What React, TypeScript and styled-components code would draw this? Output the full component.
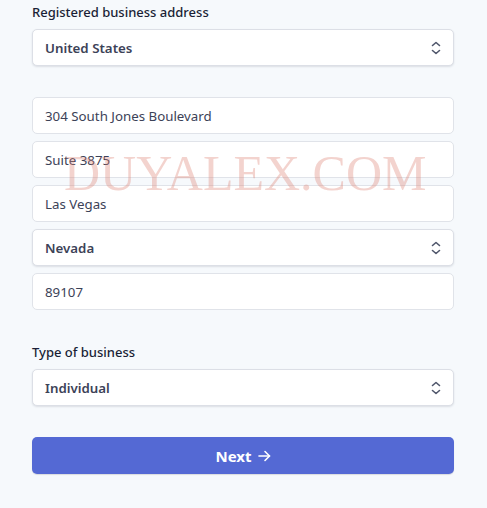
import styled, { createGlobalStyle } from "styled-components";

const GlobalStyle = createGlobalStyle`
  html, body {
    margin: 0;
    padding: 0;
    background: #f6f9fc;
  }
  body {
    font-family: "Noto Sans", "Open Sans", sans-serif;
    -webkit-font-smoothing: antialiased;
  }
`;

const Page = styled.div`
  position: relative;
  min-height: 508px;
  padding: 4px 33px 0 32px;
  box-sizing: border-box;
`;

const Form = styled.form`
  display: flex;
  flex-direction: column;
`;

const Label = styled.label`
  font-size: 13px;
  line-height: 17px;
  font-weight: 500;
  color: #1a1f36;
  margin-bottom: 8px;
`;

const FieldStack = styled.div<{ $top?: number }>`
  display: flex;
  flex-direction: column;
  gap: 7px;
  margin-top: ${(p) => p.$top ?? 0}px;
`;

const Box = styled.div`
  height: 37px;
  box-sizing: border-box;
  background: #fff;
  border-radius: 5px;
  display: flex;
  align-items: center;
  padding: 0 12px;
  font-size: 13.3px;
  color: #3c4257;
`;

const Input = styled(Box)`
  border: 1px solid #e0e3e9;
`;

const Select = styled(Box)`
  justify-content: space-between;
  font-weight: 600;
  border: 1px solid #dcdfe6;
  box-shadow: 0 1px 2px rgba(60, 66, 87, 0.14);
`;

const Section = styled.div<{ $top: number }>`
  display: flex;
  flex-direction: column;
  margin-top: ${(p) => p.$top}px;
`;

const NextButton = styled.button`
  margin-top: 31px;
  height: 37px;
  border: none;
  border-radius: 5px;
  background: #5469d4;
  color: #fff;
  font-family: inherit;
  font-size: 15px;
  font-weight: 700;
  display: flex;
  align-items: center;
  justify-content: center;
  gap: 6px;
  box-shadow: 0 1px 1px rgba(0, 0, 0, 0.12);
`;

const Watermark = styled.div`
  position: absolute;
  left: 64px;
  top: 144px;
  font-family: "Liberation Serif", serif;
  font-size: 50px;
  color: rgba(222, 130, 115, 0.35);
  pointer-events: none;
  white-space: nowrap;
`;

const Chevrons = () => (
  <svg width="10" height="14" viewBox="0 0 10 14" fill="none" stroke="#4f566b" strokeWidth="1.6" strokeLinecap="round" strokeLinejoin="round">
    <path d="M1.5 4.5L5 1.5l3.5 3" />
    <path d="M1.5 9.5L5 12.5l3.5-3" />
  </svg>
);

const Arrow = () => (
  <svg width="13" height="12" viewBox="0 0 13 12" fill="none" stroke="#fff" strokeWidth="1.6" strokeLinecap="round" strokeLinejoin="round">
    <path d="M1 6h10.5" />
    <path d="M7 1.5L11.5 6 7 10.5" />
  </svg>
);

const App = () => {
  return (
    <Page>
      <GlobalStyle />
      <Form>
        <Label>Registered business address</Label>
        <FieldStack>
          <Select>
            United States
            <Chevrons />
          </Select>
        </FieldStack>
        <FieldStack $top={31}>
          <Input>304 South Jones Boulevard</Input>
          <Input>Suite 3875</Input>
          <Input>Las Vegas</Input>
          <Select>
            Nevada
            <Chevrons />
          </Select>
          <Input>89107</Input>
        </FieldStack>
        <Section $top={34}>
          <Label>Type of business</Label>
          <Select>
            Individual
            <Chevrons />
          </Select>
        </Section>
        <NextButton type="button">
          Next <Arrow />
        </NextButton>
      </Form>
      <Watermark>DUYALEX.COM</Watermark>
    </Page>
  );
};

export default App;
